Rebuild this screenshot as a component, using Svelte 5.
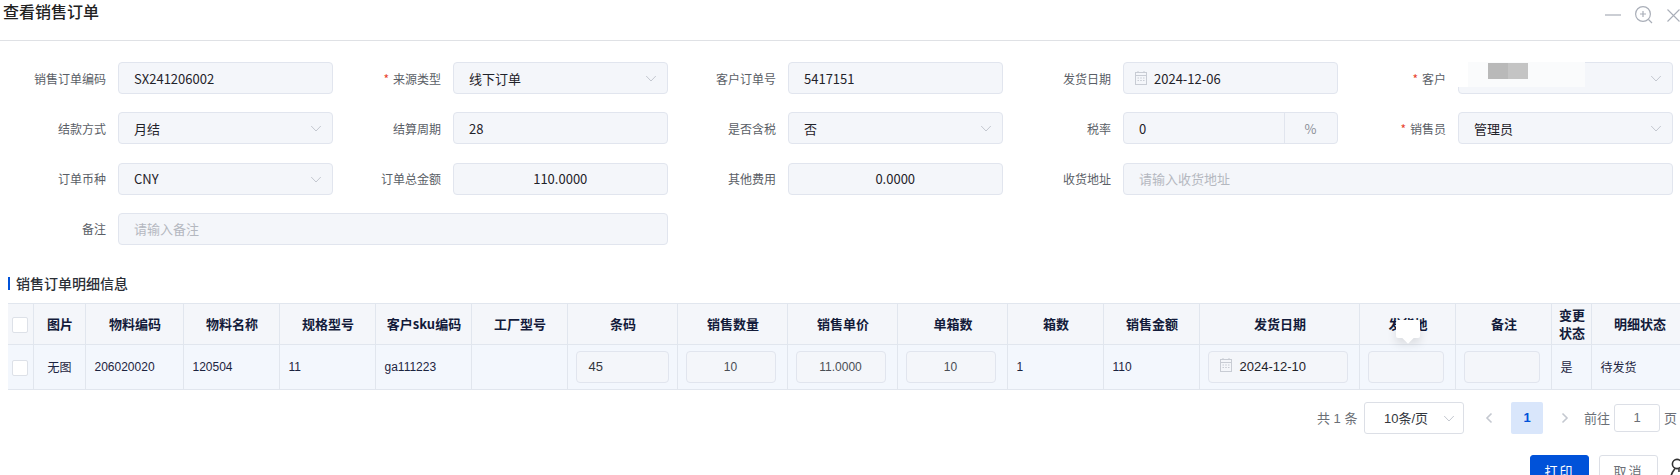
<script>
  const fields = [
    { label: '销售订单编码', value: 'SX241206002' },
    { label: '来源类型', value: '线下订单', required: true, select: true },
    { label: '客户订单号', value: '5417151' },
    { label: '发货日期', value: '2024-12-06', date: true },
    { label: '客户', value: '', required: true, select: true },
    { label: '结款方式', value: '月结', select: true },
    { label: '结算周期', value: '28' },
    { label: '是否含税', value: '否', select: true },
    { label: '税率', value: '0', suffix: '%' },
    { label: '销售员', value: '管理员', required: true, select: true },
    { label: '订单币种', value: 'CNY', select: true },
    { label: '订单总金额', value: '110.0000', center: true },
    { label: '其他费用', value: '0.0000', center: true },
    { label: '收货地址', placeholder: '请输入收货地址', span: true },
    { label: '备注', placeholder: '请输入备注', span: true }
  ];

  const columns = [
    { title: '', width: 25 },
    { title: '图片', width: 52 },
    { title: '物料编码', width: 98 },
    { title: '物料名称', width: 96 },
    { title: '规格型号', width: 96 },
    { title: '客户sku编码', width: 96 },
    { title: '工厂型号', width: 96 },
    { title: '条码', width: 110 },
    { title: '销售数量', width: 110 },
    { title: '销售单价', width: 110 },
    { title: '单箱数', width: 110 },
    { title: '箱数', width: 96 },
    { title: '销售金额', width: 96 },
    { title: '发货日期', width: 160 },
    { title: '发货地', width: 96 },
    { title: '备注', width: 96 },
    { title: '变更状态', width: 40 },
    { title: '明细状态', width: 96 }
  ];
</script>

{#snippet chevron()}
  <svg class="chevron" width="14" height="14" viewBox="0 0 14 14" fill="none">
    <path d="M2.2 5 7 10 11.8 5" stroke="#c4c8d0" stroke-width="1" />
  </svg>
{/snippet}

{#snippet calendar()}
  <svg class="calendar" width="12" height="14" viewBox="0 0 12 14" fill="none" stroke="#c8ccd4">
    <rect x="0.5" y="1.5" width="11" height="12" />
    <path d="M0.5 4.5H11.5M3 0V2M9 0V2" />
    <path d="M2.5 7H4M5.2 7H6.8M8 7H9.5M2.5 9.5H4M5.2 9.5H6.8M8 9.5H9.5" />
  </svg>
{/snippet}

<div class="page">
  <header class="dialog-head">
    <h1>查看销售订单</h1>
    <div class="head-icons">
      <svg width="16" height="2" viewBox="0 0 16 2"><path d="M0 1H16" stroke="#a9aeb8" stroke-width="1.2" /></svg>
      <svg width="20" height="20" viewBox="0 0 20 20" fill="none" stroke="#a9aeb8" stroke-width="1.2">
        <circle cx="9" cy="9" r="7.4" />
        <path d="M14.5 14.5 18 18M9 6V12M6 9H12" />
      </svg>
      <svg width="13" height="13" viewBox="0 0 13 13" fill="none" stroke="#a9aeb8" stroke-width="1.1">
        <path d="M0.5 0.5 12.5 12.5M12.5 0.5 0.5 12.5" />
      </svg>
    </div>
  </header>

  <form class="form">
    {#each fields as f}
      <div class="field" class:span={f.span}>
        <span class="label">
          {#if f.required}<i>*</i>{/if}{f.label}
        </span>
        <div class="control" class:center={f.center} class:with-date={f.date}>
          {#if f.date}{@render calendar()}{/if}
          {#if f.placeholder}
            <span class="placeholder">{f.placeholder}</span>
          {:else}
            <span class="value">{f.value}</span>
          {/if}
          {#if f.select}{@render chevron()}{/if}
          {#if f.suffix}<span class="suffix">{f.suffix}</span>{/if}
        </div>
      </div>
    {/each}
  </form>

  <div class="mask">
    <b></b><b></b>
  </div>

  <h2 class="section">销售订单明细信息</h2>

  <table>
    <colgroup>
      {#each columns as c}
        <col style="width: {c.width}px" />
      {/each}
    </colgroup>
    <thead>
      <tr>
        {#each columns as c, i}
          <th>
            {#if i === 0}<span class="check"></span>{:else}{c.title}{/if}
          </th>
        {/each}
      </tr>
    </thead>
    <tbody>
      <tr>
        <td class="mid"><span class="check"></span></td>
        <td class="mid">无图</td>
        <td>206020020</td>
        <td>120504</td>
        <td>11</td>
        <td>ga111223</td>
        <td></td>
        <td class="cell-input wide"><div class="mini left">45</div></td>
        <td class="cell-input"><div class="mini">10</div></td>
        <td class="cell-input"><div class="mini">11.0000</div></td>
        <td class="cell-input"><div class="mini">10</div></td>
        <td>1</td>
        <td>110</td>
        <td class="cell-input"><div class="mini date">{@render calendar()}<span>2024-12-10</span></div></td>
        <td class="cell-input"><div class="mini"></div></td>
        <td class="cell-input"><div class="mini"></div></td>
        <td>是</td>
        <td>待发货</td>
      </tr>
    </tbody>
  </table>

  <div class="tip"></div>

  <nav class="pager">
    <span class="total">共 1 条</span>
    <div class="size">10条/页 {@render chevron()}</div>
    <svg class="arrow prev" width="8" height="12" viewBox="0 0 8 12" fill="none"><path d="M6.5 1.5 2 6 6.5 10.5" stroke="#c4c8d0" stroke-width="1.6" /></svg>
    <span class="current">1</span>
    <svg class="arrow next" width="8" height="12" viewBox="0 0 8 12" fill="none"><path d="M1.5 1.5 6 6 1.5 10.5" stroke="#c4c8d0" stroke-width="1.6" /></svg>
    <span class="goto">前往</span>
    <div class="jump">1</div>
    <span class="unit">页</span>
  </nav>

  <footer class="actions">
    <button type="button" class="primary">打印</button>
    <button type="button">取消</button>
    <svg class="person" width="14" height="32" viewBox="0 0 14 32" fill="none" stroke="#333" stroke-width="1.6">
      <circle cx="7" cy="7" r="4.6" />
      <path d="M5 11.5C3 14 1.5 16 0.8 20M9 11.5V15" />
    </svg>
  </footer>
</div>

<style>
  :global(body) {
    overflow: hidden;
    background: #fff;
  }

  .page {
    position: relative;
    width: 1680px;
    height: 475px;
    overflow: hidden;
    font-family: "Noto Sans CJK SC", "Liberation Sans", sans-serif;
    font-size: 12px;
    color: #1c2438;
  }

  .dialog-head {
    display: flex;
    justify-content: space-between;
    height: 40px;
    border-bottom: 1px solid #dfe1e5;
    padding-left: 3px;
  }

  h1 {
    margin: 0;
    font-size: 16px;
    font-weight: 500;
    line-height: 23px;
    color: #222;
  }

  .head-icons {
    display: flex;
    align-items: center;
    gap: 13px;
    height: 30px;
  }

  .form {
    display: grid;
    grid-template-columns: repeat(5, 335px);
    row-gap: 18.33px;
    padding-top: 21px;
  }

  .field {
    display: flex;
    align-items: center;
    height: 32px;
  }

  .field.span {
    grid-column: span 2;
  }

  .field:last-child {
    grid-column: 1 / span 2;
  }

  .label {
    flex: none;
    width: 106px;
    margin-right: 12px;
    text-align: right;
    font-size: 12px;
    color: #5a5e66;
  }

  .label i {
    margin-right: 4px;
    font-style: normal;
    color: #e8432e;
  }

  .control {
    display: flex;
    flex: none;
    align-items: center;
    width: 214.5px;
    height: 32px;
    box-sizing: border-box;
    padding: 0 15px;
    border: 1px solid #e1e5ee;
    border-radius: 4px;
    background: #f4f6fa;
    font-size: 13px;
    color: #1f2229;
  }

  .span .control {
    width: 549.5px;
  }

  .control.center {
    justify-content: center;
  }

  .control.with-date {
    padding-left: 11px;
  }

  .value {
    flex: 1;
  }

  .center .value {
    flex: none;
  }

  .placeholder {
    color: #b4b8c0;
  }

  .chevron {
    flex: none;
    margin-right: -6px;
  }

  .calendar {
    flex: none;
    margin-right: 7px;
  }

  .suffix {
    align-self: stretch;
    display: flex;
    align-items: center;
    justify-content: center;
    width: 52px;
    margin-right: -15px;
    border-left: 1px solid #e1e5ee;
    color: #8b8f97;
  }

  /* the customer name is blurred out in the screenshot */
  .mask {
    position: absolute;
    left: 1445px;
    top: 62px;
    display: flex;
    width: 140px;
    height: 25px;
    padding-left: 43px;
    box-sizing: border-box;
    background: linear-gradient(90deg, #fff 23px, #fafbfc 23px);
  }

  .mask b {
    width: 20px;
    height: 16px;
    margin-top: 1px;
    background: #b9b9b9;
  }

  .mask b + b {
    background: #c4c4c4;
  }

  .section {
    margin: 32px 0 0 8px;
    padding-left: 6px;
    border-left: 2px solid #0052d9;
    height: 13px;
    line-height: 12px;
    font-size: 14px;
    font-weight: 500;
    color: #2b2f36;
  }

  table {
    width: 1679px;
    margin: 13px 0 0 8px;
    border-collapse: collapse;
    table-layout: fixed;
    border-top: 1px solid #e1e6ee;
  }

  th,
  td {
    border: 1px solid #e1e6ee;
    border-top: 0;
    padding: 0 8px 0 9px;
    box-sizing: border-box;
  }

  th {
    height: 41px;
    padding: 0 3px 0 5px;
    background: #f4f6fa;
    font-size: 13px;
    font-weight: 700;
    line-height: 18px;
    text-align: center;
    color: #131b3a;
  }

  th:first-child,
  td:first-child {
    border-left: 0;
    padding: 0;
    text-align: center;
  }

  td {
    height: 45px;
    background: #f3f7fd;
    font-family: "Liberation Sans", "Noto Sans CJK SC", sans-serif;
    font-size: 12px;
    color: #1c2440;
  }

  td.mid {
    text-align: center;
    font-family: "Noto Sans CJK SC", sans-serif;
  }

  .check {
    display: inline-block;
    vertical-align: middle;
    width: 14px;
    height: 14px;
    border: 1px solid #dde1e8;
    border-radius: 2px;
    background: #fff;
  }

  td.cell-input {
    padding: 0 11px 0 8px;
  }

  td.cell-input.wide {
    padding: 0 8px;
  }

  .mini {
    display: flex;
    align-items: center;
    justify-content: center;
    height: 32px;
    box-sizing: border-box;
    border: 1px solid #e1e5ee;
    border-radius: 4px;
    background: #f4f6fa;
    font-size: 12px;
    color: #4a4e55;
  }

  .mini.left {
    justify-content: flex-start;
    padding-left: 12px;
    font-size: 13px;
    color: #33373e;
  }

  .mini.date {
    justify-content: flex-start;
    padding-left: 11px;
    font-size: 13px;
    color: #1f2229;
  }

  .mini.date :global(.calendar) {
    margin: -4px 8px 0 0;
  }

  .tip {
    position: absolute;
    left: 1396px;
    top: 320px;
    width: 24px;
    height: 18px;
    border-radius: 2px;
    background: #fff;
    box-shadow: 0 6px 10px rgba(0, 0, 0, 0.1);
  }

  .tip::after {
    content: "";
    position: absolute;
    left: 8px;
    top: 14px;
    width: 8px;
    height: 8px;
    background: #fff;
    transform: rotate(45deg);
  }

  .pager {
    display: flex;
    align-items: center;
    height: 32px;
    margin-top: 12px;
    padding-left: 1317px;
    font-family: "Liberation Sans", "Noto Sans CJK SC", sans-serif;
    font-size: 13px;
    color: #6b6f76;
  }

  .total {
    width: 47px;
  }

  .size {
    display: flex;
    align-items: center;
    justify-content: space-between;
    width: 100px;
    height: 32px;
    box-sizing: border-box;
    padding: 0 7px 0 19px;
    border: 1px solid #dcdfe6;
    border-radius: 3px;
    color: #33373e;
  }

  .size :global(.chevron) {
    margin-right: 0;
  }

  .arrow.prev {
    margin: 0 18px 0 21px;
  }

  .current {
    width: 32px;
    height: 32px;
    line-height: 32px;
    border-radius: 2px;
    background: #d9e6fb;
    text-align: center;
    font-weight: 700;
    color: #0052d9;
  }

  .arrow.next {
    margin: 0 15px 0 18px;
  }

  .goto {
    width: 30px;
  }

  .jump {
    width: 46px;
    height: 28px;
    line-height: 26px;
    box-sizing: border-box;
    border: 1px solid #dcdfe6;
    border-radius: 3px;
    text-align: center;
  }

  .unit {
    margin-left: 4px;
  }

  .actions {
    display: flex;
    align-items: flex-start;
    gap: 10px;
    margin-top: 21px;
    padding-left: 1530px;
  }

  button {
    flex: none;
    width: 59px;
    height: 32px;
    padding: 0;
    border: 1px solid #dcdfe6;
    border-radius: 3px;
    background: #fff;
    font-family: inherit;
    font-size: 13px;
    letter-spacing: 2px;
    color: #6b6f76;
  }

  button.primary {
    border-color: #0052d9;
    background: #0052d9;
    color: #fff;
  }

  .person {
    flex: none;
    margin-left: 2px;
    margin-top: 2px;
  }
</style>
